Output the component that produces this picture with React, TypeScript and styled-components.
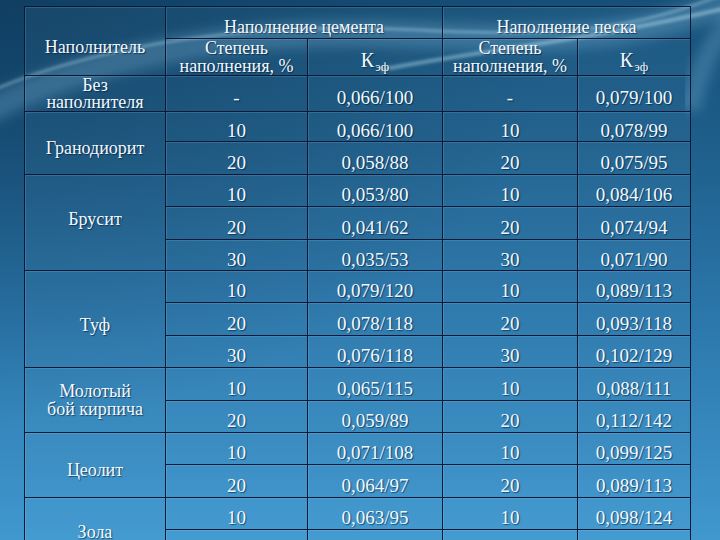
import * as React from "react";
import styled, { createGlobalStyle } from "styled-components";

const GlobalStyle = createGlobalStyle`
  html, body {
    margin: 0;
    padding: 0;
    background: #15496e;
  }
`;

const serif = `"Liberation Serif", "Times New Roman", serif`;

const Slide = styled.main`
  position: relative;
  width: 720px;
  height: 540px;
  overflow: hidden;
  box-sizing: border-box;
  padding: 6px 0 0 24px;
  background:
    radial-gradient(ellipse at 0% 0%, rgba(8, 40, 70, 0.45) 0%, rgba(8, 40, 70, 0) 55%),
    linear-gradient(180deg, #165078 0%, #1d5d89 25%, #2c78ac 60%, #4098cf 100%);
  font-family: ${serif};
`;

const Swoosh = styled.svg`
  position: absolute;
  inset: 0;
  width: 720px;
  height: 540px;
  pointer-events: none;
  z-index: 0;
`;

const Table = styled.table`
  position: relative;
  z-index: 1;
  width: 666px;
  table-layout: fixed;
  border-collapse: collapse;
  font-family: ${serif};
  color: #f0f9ff;
  text-shadow: 1px 1px 1px rgba(0, 20, 50, 0.6);
`;

const Row = styled.tr<{ $h: number }>`
  height: ${(p) => p.$h}px;
`;

const Cell = styled.td`
  border: 1.5px solid #0a1a36;
  padding: 8px 2px 0;
  text-align: center;
  vertical-align: middle;
  font-family: ${serif};
  font-size: 19px;
  line-height: 19px;
  background: rgba(140, 200, 240, 0.06);
  box-shadow: inset 1px 1px 0 rgba(170, 220, 255, 0.16);
`;

const HeadCell = styled(Cell)`
  font-size: 18px;
  line-height: 18px;
  padding-top: 0;
`;

const GroupHead = styled(HeadCell)`
  padding-top: 9px;
`;

const NameCell = styled(Cell)<{ $shift: number; $lh: number }>`
  font-size: 18px;
  line-height: ${(p) => p.$lh}px;
  padding-top: ${(p) => Math.max(p.$shift, 0)}px;
  padding-bottom: ${(p) => Math.max(-p.$shift, 0)}px;
`;

const KHead = styled(HeadCell)`
  font-size: 20px;
  line-height: 20px;
  padding-top: 6px;
`;

const Sub = styled.sub`
  font-size: 13px;
  line-height: 0;
  vertical-align: -4px;
  margin-left: 1px;
`;

type Group = {
  name: React.ReactNode;
  shift: number;
  lh: number;
  rows: { h: number; c1: string; c2: string; s1: string; s2: string }[];
};

const groups: Group[] = [
  {
    name: (
      <>
        Без
        <br />
        наполнителя
      </>
    ),
    shift: 0,
    lh: 17,
    rows: [{ h: 36, c1: "-", c2: "0,066/100", s1: "-", s2: "0,079/100" }],
  },
  {
    name: "Гранодиорит",
    shift: 9,
    lh: 18,
    rows: [
      { h: 30, c1: "10", c2: "0,066/100", s1: "10", s2: "0,078/99" },
      { h: 33, c1: "20", c2: "0,058/88", s1: "20", s2: "0,075/95" },
    ],
  },
  {
    name: "Брусит",
    shift: -7,
    lh: 18,
    rows: [
      { h: 32, c1: "10", c2: "0,053/80", s1: "10", s2: "0,084/106" },
      { h: 33, c1: "20", c2: "0,041/62", s1: "20", s2: "0,074/94" },
      { h: 31, c1: "30", c2: "0,035/53", s1: "30", s2: "0,071/90" },
    ],
  },
  {
    name: "Туф",
    shift: 11,
    lh: 18,
    rows: [
      { h: 32, c1: "10", c2: "0,079/120", s1: "10", s2: "0,089/113" },
      { h: 33, c1: "20", c2: "0,078/118", s1: "20", s2: "0,093/118" },
      { h: 32, c1: "30", c2: "0,076/118", s1: "30", s2: "0,102/129" },
    ],
  },
  {
    name: (
      <>
        Молотый
        <br />
        бой кирпича
      </>
    ),
    shift: 0,
    lh: 18,
    rows: [
      { h: 33, c1: "10", c2: "0,065/115", s1: "10", s2: "0,088/111" },
      { h: 32, c1: "20", c2: "0,059/89", s1: "20", s2: "0,112/142" },
    ],
  },
  {
    name: "Цеолит",
    shift: 9,
    lh: 18,
    rows: [
      { h: 32, c1: "10", c2: "0,071/108", s1: "10", s2: "0,099/125" },
      { h: 33, c1: "20", c2: "0,064/97", s1: "20", s2: "0,089/113" },
    ],
  },
  {
    name: "Зола",
    shift: 4,
    lh: 18,
    rows: [
      { h: 32, c1: "10", c2: "0,063/95", s1: "10", s2: "0,098/124" },
      { h: 32, c1: "", c2: "", s1: "", s2: "" },
    ],
  },
];

function Keff() {
  return (
    <>
      К<Sub>эф</Sub>
    </>
  );
}

function App() {
  return (
    <Slide>
      <GlobalStyle />
      <Swoosh viewBox="0 0 720 540">
        <defs>
          <filter id="soft" x="-10%" y="-50%" width="120%" height="200%">
            <feGaussianBlur stdDeviation="6" />
          </filter>
          <filter id="thin" x="-10%" y="-50%" width="120%" height="200%">
            <feGaussianBlur stdDeviation="1.5" />
          </filter>
        </defs>
        <path
          d="M -30 120 C 80 60, 220 30, 380 34 S 620 50, 760 -10"
          fill="none"
          stroke="rgba(170, 225, 255, 0.22)"
          strokeWidth="26"
          filter="url(#soft)"
        />
        <path
          d="M -30 100 C 100 40, 260 22, 420 30 S 640 30, 760 -20"
          fill="none"
          stroke="rgba(200, 240, 255, 0.35)"
          strokeWidth="3"
          filter="url(#thin)"
        />
        <path
          d="M 380 70 C 480 50, 600 40, 760 0"
          fill="none"
          stroke="rgba(210, 245, 255, 0.4)"
          strokeWidth="4"
          filter="url(#thin)"
        />
        <path
          d="M 690 110 C 700 60, 720 30, 740 10"
          fill="none"
          stroke="rgba(170, 225, 255, 0.2)"
          strokeWidth="20"
          filter="url(#soft)"
        />
      </Swoosh>
      <Table>
        <colgroup>
          <col style={{ width: 141 }} />
          <col style={{ width: 142 }} />
          <col style={{ width: 135 }} />
          <col style={{ width: 135 }} />
          <col style={{ width: 113 }} />
        </colgroup>
        <thead>
          <Row $h={32}>
            <NameCell rowSpan={2} $shift={11} $lh={18}>
              Наполнитель
            </NameCell>
            <GroupHead colSpan={2}>Наполнение цемента</GroupHead>
            <GroupHead colSpan={2}>Наполнение песка</GroupHead>
          </Row>
          <Row $h={37}>
            <HeadCell>
              Степень
              <br />
              наполнения, %
            </HeadCell>
            <KHead>
              <Keff />
            </KHead>
            <HeadCell>
              Степень
              <br />
              наполнения, %
            </HeadCell>
            <KHead>
              <Keff />
            </KHead>
          </Row>
        </thead>
        <tbody>
          {groups.map((g, gi) =>
            g.rows.map((r, ri) => (
              <Row key={`${gi}-${ri}`} $h={r.h}>
                {ri === 0 && (
                  <NameCell rowSpan={g.rows.length} $shift={g.shift} $lh={g.lh}>
                    {g.name}
                  </NameCell>
                )}
                <Cell>{r.c1}</Cell>
                <Cell>{r.c2}</Cell>
                <Cell>{r.s1}</Cell>
                <Cell>{r.s2}</Cell>
              </Row>
            ))
          )}
        </tbody>
      </Table>
    </Slide>
  );
}

export default App;
